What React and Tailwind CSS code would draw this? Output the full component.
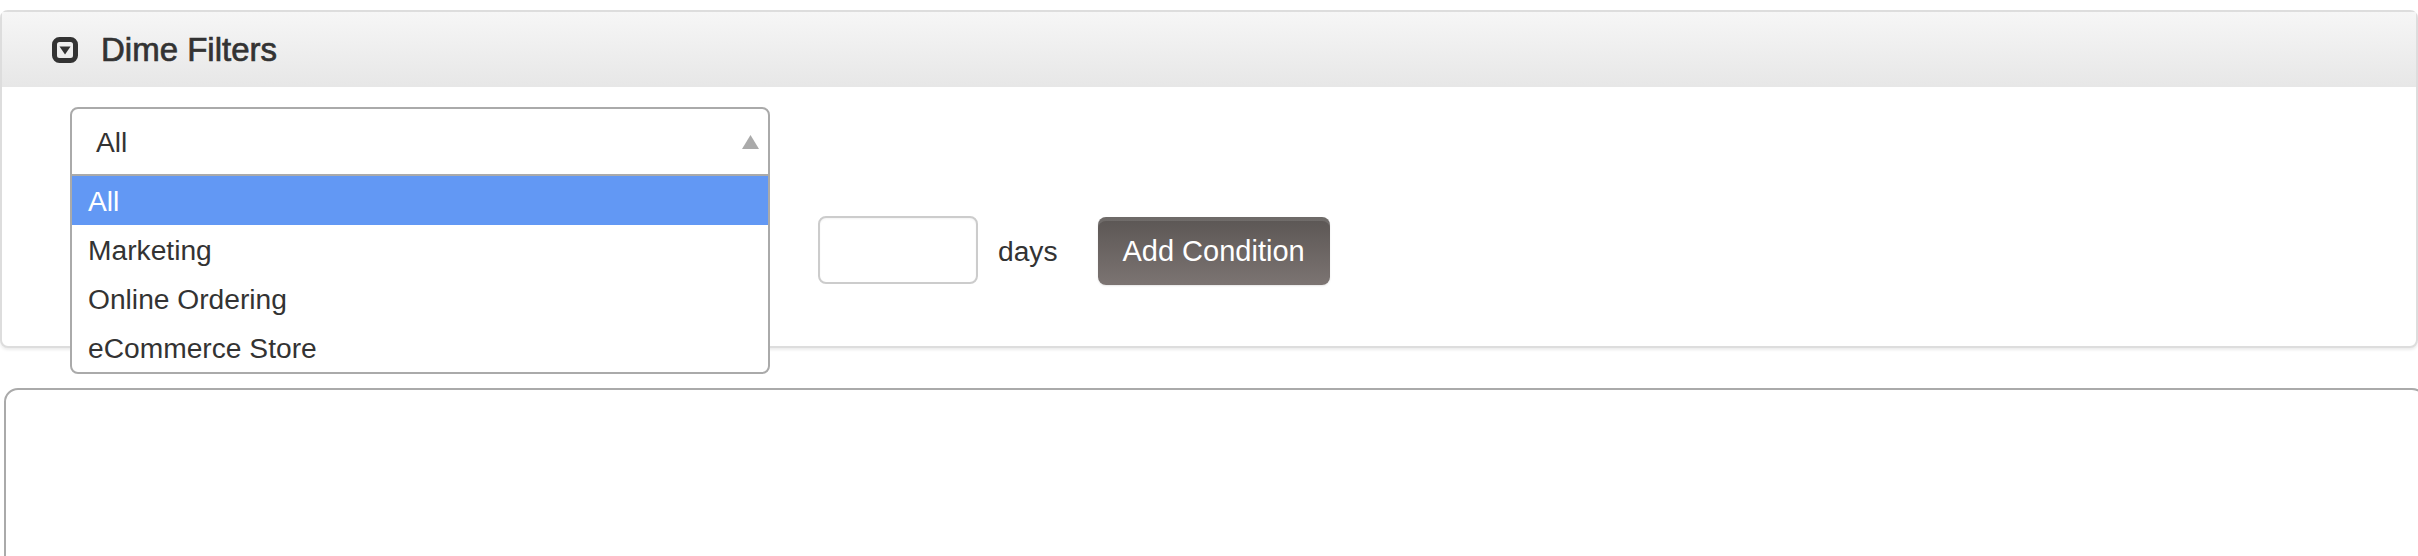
const options = ["All", "Marketing", "Online Ordering", "eCommerce Store"];

function CollapseIcon() {
  return (
    <svg width="26" height="26" viewBox="0 0 26 26" className="shrink-0">
      <rect x="2.5" y="2.5" width="21" height="21" rx="5" fill="none" stroke="#333" strokeWidth="5" />
      <path d="M7.5 9.5h11L13 17.5z" fill="#333" />
    </svg>
  );
}

function CategorySelect() {
  return (
    <div className="relative h-[69px] w-[700px]">
      <div className="absolute left-0 top-0 z-10 w-full overflow-hidden rounded-[8px] border-2 border-[#aaaaaa] bg-white">
        <div className="flex h-[67px] items-center justify-between border-b-2 border-[#aaaaaa] pl-[24px] pr-[9px]">
          <span className="pt-[1px]">All</span>
          <svg width="17" height="14" viewBox="0 0 17 14">
            <path d="M8.5 0L17 14H0z" fill="#aaaaaa" />
          </svg>
        </div>
        <ul>
          {options.map((opt, i) => (
            <li
              key={opt}
              className={
                i === 0
                  ? "flex h-[49px] items-center bg-[#6298f4] pl-[16px] pt-[1px] text-white"
                  : "flex h-[49px] items-center pl-[16px] pt-[1px]"
              }
            >
              {opt}
            </li>
          ))}
        </ul>
      </div>
    </div>
  );
}

export default function App() {
  return (
    <div className="h-[556px] w-full overflow-hidden bg-white pt-[10px] font-['Liberation_Sans',Arial,sans-serif] text-[28.2px] leading-none text-[#333333]">
      <div className="h-[338px] rounded-[8px] border-2 border-[#dddddd] bg-white shadow-[0_2px_3px_rgba(0,0,0,0.08)]">
        <div className="flex h-[75px] items-center gap-[23px] bg-gradient-to-b from-[#f6f6f6] to-[#e7e7e7] pl-[50px]">
          <CollapseIcon />
          <h2 className="text-[33px] font-normal [-webkit-text-stroke:0.7px_#333333]">Dime Filters</h2>
        </div>
        <div className="pl-[68px] pt-[20px]">
          <CategorySelect />
          <div className="ml-[748px] mt-[40px] flex items-start">
            <input
              type="text"
              className="h-[68px] w-[160px] rounded-[8px] border-2 border-[#cccccc] shadow-[inset_0_1px_2px_rgba(0,0,0,0.05)]"
            />
            <span className="ml-[20px] self-center pt-[2px]">days</span>
            <button className="ml-[40px] mt-[1px] h-[68px] w-[232px] rounded-[8px] bg-gradient-to-b from-[#5b5654] to-[#7c7472] text-[29px] text-white shadow-[inset_0_4px_0_rgba(255,255,255,0.12),0_1px_2px_rgba(0,0,0,0.1)]">
              Add Condition
            </button>
          </div>
        </div>
      </div>
      <div className="ml-[4px] mr-[-8px] mt-[40px] h-[220px] rounded-[14px] border-2 border-[#aaaaaa] bg-white" />
    </div>
  );
}
